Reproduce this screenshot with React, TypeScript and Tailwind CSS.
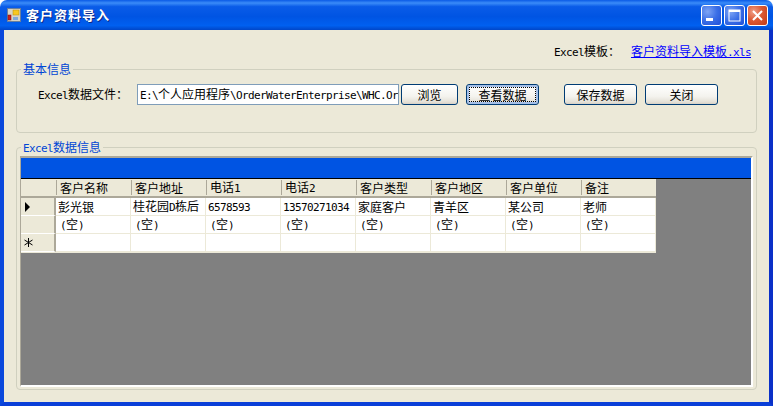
const COLUMNS = ["客户名称", "客户地址", "电话1", "电话2", "客户类型", "客户地区", "客户单位", "备注"];

const ROW_1 = ["彭光银", "桂花园D栋后", "6578593", "13570271034", "家庭客户", "青羊区", "某公司", "老师"];

// 点阵宋体的半角宽 6px, 这里用 11px 等宽字体收紧字距凑
function Mixed({ text }: { text: string }) {
  const parts = text.match(/[\x20-\x7e]+|[^\x20-\x7e]+/g) ?? [];
  return (
    <span className="whitespace-nowrap">
      {parts.map((p, i) =>
        /^[\x20-\x7e]/.test(p) ? (
          <span key={i} className="text-[11px] tracking-[-0.62px] font-['DejaVu_Sans_Mono',monospace]">{p}</span>
        ) : (
          <span key={i}>{p}</span>
        )
      )}
    </span>
  );
}

function WinButton({ title, width, focused }: { title: string; width: string; focused?: boolean }) {
  return (
    <button
      className={`${width} h-[21px] shrink-0 rounded-[3px] border border-[#003c74] bg-[linear-gradient(180deg,#ffffff_0%,#f4f3ee_60%,#e4e0d6_90%,#d6d0c5_100%)] text-black leading-none ${focused ? "shadow-[inset_0_0_0_2px_#a6c0e8] p-[2px]" : ""}`}
    >
      <span className={`flex h-full w-full items-center justify-center ${focused ? "border border-dotted border-black" : ""}`}>
        <Mixed text={title} />
      </span>
    </button>
  );
}

function TitleButton({ kind }: { kind: "min" | "max" | "close" }) {
  const bg =
    kind === "close"
      ? "bg-[radial-gradient(circle_at_30%_30%,#f0a088_0%,#dc5a35_45%,#c23a14_100%)]"
      : "bg-[radial-gradient(circle_at_30%_30%,#7ea4f4_0%,#3a6ee6_50%,#1f4fd8_100%)]";
  return (
    <div className={`flex h-[21px] w-[21px] items-center justify-center rounded-[3px] border border-white ${bg}`}>
      <svg width="15" height="15" viewBox="0 0 15 15">
        {kind === "min" && <rect x="2" y="10" width="7" height="3" fill="#fff" />}
        {kind === "max" && (
          <>
            <rect x="2" y="2" width="11" height="11" fill="none" stroke="#fff" strokeWidth="1" />
            <rect x="2" y="2" width="11" height="2" fill="#fff" />
          </>
        )}
        {kind === "close" && <path d="M3 3 L12 12 M12 3 L3 12" stroke="#fff" strokeWidth="2" />}
      </svg>
    </div>
  );
}

function AppIcon() {
  return (
    <svg width="14" height="14" viewBox="0 0 14 14">
      <rect x="0" y="0" width="14" height="14" fill="#d8d4c4" />
      <rect x="0.5" y="0.5" width="13" height="13" fill="none" stroke="#6a7f9c" />
      <rect x="1" y="7" width="3" height="5" fill="#c81e1e" stroke="#7a1010" strokeWidth="0.5" />
      <rect x="6" y="2" width="6" height="5" fill="#f7c820" stroke="#b48a10" strokeWidth="0.5" />
      <rect x="6" y="9" width="5" height="3" fill="#7fa8d8" />
    </svg>
  );
}

function HeaderCell({ label }: { label: string }) {
  return (
    <div className="flex h-[19px] items-center border-b-2 border-b-[#aca899] bg-[#ece9d8] leading-none text-black">
      <span className="mr-[3px] h-[15px] w-[1px] shrink-0 bg-[#aca899]" />
      <Mixed text={label} />
    </div>
  );
}

function BodyCell({ children }: { children?: React.ReactNode }) {
  return (
    <div className="flex h-[18px] items-center overflow-hidden whitespace-nowrap border-b border-r border-[#ece9d8] bg-white pl-[2px] leading-none text-black">
      {children}
    </div>
  );
}

function RowHead({ children }: { children?: React.ReactNode }) {
  return (
    <div className="flex h-[18px] items-center border-b border-b-[#ffffff] border-r-2 border-r-[#aca899] bg-[#ece9d8] pl-[3px]">
      {children}
    </div>
  );
}

export default function App() {
  return (
    <div className="flex h-[406px] w-[773px] flex-col overflow-hidden rounded-t-[7px] text-[12px] font-['Noto_Sans_CJK_SC','Liberation_Sans',sans-serif]">
      {/* 标题栏 */}
      <div className="flex h-[30px] shrink-0 items-center justify-between bg-[linear-gradient(180deg,#0a5ae6_0%,#3b8cf8_10%,#0a5ce8_22%,#0054e3_55%,#0060f0_85%,#0046c8_100%)] pl-[7px] pr-[5px]">
        <div className="flex items-center gap-[5px]">
          <AppIcon />
          <span className="text-[13px] font-bold tracking-[1px] text-white [text-shadow:1px_1px_0_#0a2a8a]">客户资料导入</span>
        </div>
        <div className="flex gap-[2px]">
          <TitleButton kind="min" />
          <TitleButton kind="max" />
          <TitleButton kind="close" />
        </div>
      </div>

      {/* 窗体 */}
      <div className="flex min-h-0 flex-1 flex-col border-b-4 border-l-4 border-r-4 border-b-[#0a3fd8] border-l-[#0a48dc] border-r-[#0a30c8] bg-[#ece9d8] px-[12px] pb-[12px]">
        <div className="flex h-[32px] shrink-0 items-end justify-end pb-[3px] pr-[6px] leading-none text-black">
          <span className="pb-[1px]"><Mixed text="Excel模板：" /></span>
          <a className="ml-[11px] pb-[1px] text-[#0000ff] underline" href="#"><Mixed text="客户资料导入模板.xls" /></a>
        </div>

        <fieldset className="h-[71px] shrink-0 rounded-[4px] border border-[#d0d0bf]">
          <legend className="ml-[4px] h-[14px] px-[2px] leading-[14px] text-[#0046d5]"><Mixed text="基本信息" /></legend>
          <div className="mt-[8px] flex items-center pl-[21px]">
            <span className="w-[99px] shrink-0 leading-none text-black"><Mixed text="Excel数据文件：" /></span>
            <div className="flex h-[21px] w-[262px] shrink-0 items-center overflow-hidden whitespace-nowrap border border-[#7f9db9] bg-white pl-[2px] leading-none text-black">
              <Mixed text="E:\个人应用程序\OrderWaterEnterprise\WHC.Or" />
            </div>
            <div className="ml-[2px]"><WinButton title="浏览" width="w-[57px]" /></div>
            <div className="ml-[8px]"><WinButton title="查看数据" width="w-[73px]" focused /></div>
            <div className="ml-[25px]"><WinButton title="保存数据" width="w-[73px]" /></div>
            <div className="ml-[8px]"><WinButton title="关闭" width="w-[73px]" /></div>
          </div>
        </fieldset>

        <fieldset className="mt-[7px] flex min-h-0 flex-1 flex-col rounded-[4px] border border-[#d0d0bf]">
          <legend className="ml-[4px] h-[14px] px-[2px] leading-[14px] text-[#0046d5]"><Mixed text="Excel数据信息" /></legend>
          <div className="mx-[3px] mb-[2px] mt-[2px] flex min-h-0 flex-1 flex-col border-b-2 border-l border-r-2 border-t-2 border-b-white border-l-[#aca899] border-r-white border-t-[#aca899] bg-[#808080]">
            <div className="h-[21px] shrink-0 border-b border-black bg-[#0054e3]" />
            <div className="grid w-[635px] grid-cols-[35px_repeat(8,75px)] border-b border-[#ece9d8]">
              <div className="h-[19px] border-b-2 border-b-[#aca899] bg-[#ece9d8]" />
              {COLUMNS.map((c) => (
                <HeaderCell key={c} label={c} />
              ))}

              <RowHead>
                <svg width="8" height="10" viewBox="0 0 8 10"><path d="M1 0 L6 5 L1 10 Z" fill="#000" /></svg>
              </RowHead>
              {ROW_1.map((v) => (
                <BodyCell key={v}><Mixed text={v} /></BodyCell>
              ))}

              <RowHead />
              {COLUMNS.map((c) => (
                <BodyCell key={c}>
                  <span className="pl-[2px]"><Mixed text="(空)" /></span>
                </BodyCell>
              ))}

              <RowHead>
                <svg width="9" height="9" viewBox="0 0 9 9">
                  <path d="M4.5 0 V9 M0.5 2 L8.5 7 M8.5 2 L0.5 7" stroke="#000" strokeWidth="1" />
                </svg>
              </RowHead>
              {COLUMNS.map((c) => (
                <BodyCell key={c} />
              ))}
            </div>
          </div>
        </fieldset>
      </div>
    </div>
  );
}
